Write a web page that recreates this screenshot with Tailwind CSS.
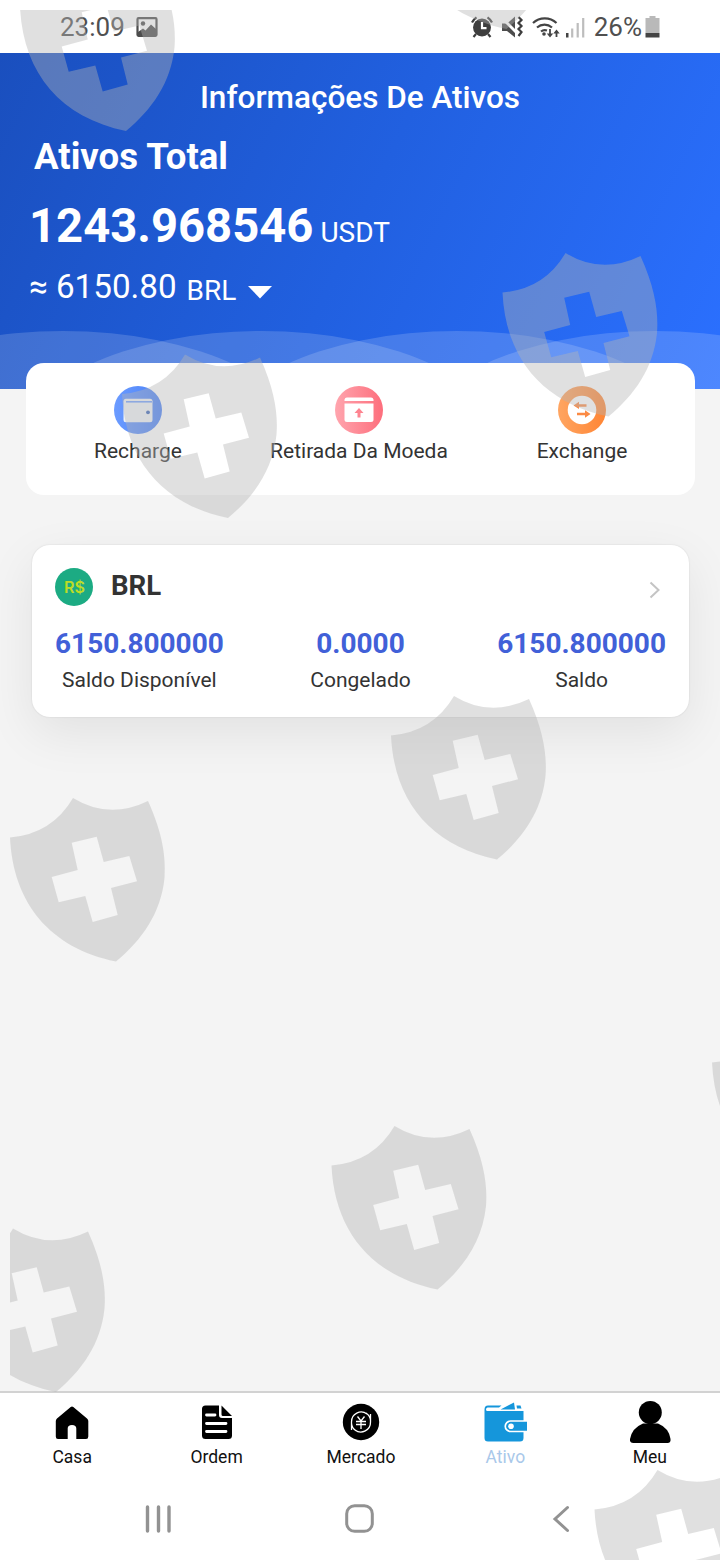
<!DOCTYPE html>
<html lang="pt-BR">
<head>
<meta charset="utf-8">
<title>Informações De Ativos</title>
<script src="https://cdn.jsdelivr.net/npm/@tailwindcss/browser@4"></script>
</head>
<body class="bg-[#f4f4f4]">
<div class="relative flex h-[1560px] w-[720px] flex-col overflow-hidden bg-[#f4f4f4] font-['Roboto','Noto_Sans',sans-serif] text-[#333]">

  <!-- Status bar -->
  <div class="flex h-[53px] shrink-0 items-center justify-between bg-white pt-px pr-[60px] pl-[60px] text-[26px] text-[#505050]">
    <div class="flex items-center gap-[11px]">
      <span>23:09</span>
      <svg class="h-[20px] w-[22px]" viewBox="0 0 22 20"><rect x="1.500" y="1.200" width="19" height="17.600" rx="1" fill="none" stroke="#4c4c4c" stroke-width="2.200"/><circle cx="7" cy="6.500" r="2.200" fill="#4c4c4c"/><path d="M2 15 7 11.500 9.500 13.500 15 7.500 20 12V18H2Z" fill="#4c4c4c"/></svg>
    </div>
    <div class="flex items-center">
      <svg class="mr-[7px] h-[22px] w-[22px]" viewBox="0 0 22 22"><circle cx="11" cy="11.500" r="9" fill="#3e3e3e"/><path d="M1 6.500A13 13 0 0 1 5.500 1.300M16.500 1.300A13 13 0 0 1 21 6.500M5 18 2.500 21M17 18 19.500 21" stroke="#3e3e3e" stroke-width="2.200" fill="none"/><path d="M11 6V12.200H15.500" stroke="#fff" stroke-width="2.200" fill="none"/></svg>
      <svg class="mr-[8px] h-[24px] w-[24px]" viewBox="0 0 24 24"><path d="M2 8.500H7L15 1.500V22.500L7 16H2Z" fill="#4c4c4c"/><path d="M1 2 17 18" stroke="#fff" stroke-width="3"/><path d="M18.500 2 21.500 5 18.500 8 21.500 11 18.500 14 21.500 17 18.500 21" fill="none" stroke="#3e3e3e" stroke-width="2.200"/></svg>
      <svg class="mr-[6px] h-[24px] w-[28px]" viewBox="0 0 28 24"><g fill="none" stroke="#444" stroke-width="2.200"><path d="M1 8A17 17 0 0 1 24.500 8M5 12.500A11.500 11.500 0 0 1 20 12.500M9 16.500A6 6 0 0 1 15 15.500"/><path d="M18 14V21M24.500 22V16" stroke-width="1.800"/></g><circle cx="12" cy="19" r="1.800" fill="#444"/><path d="M14.800 18.500H21.200L18 22.500ZM21.300 18.500H27.700L24.500 14.500Z" fill="#444"/></svg>
      <svg class="mr-[9px] h-[22px] w-[19px]" viewBox="0 0 19 22"><rect x="0" y="17" width="2.500" height="4.500" fill="#444"/><path d="M6.200 12.500V21.500M11.700 7V21.500M17.200 2V21.500" stroke="#bdbdbd" stroke-width="2.200"/></svg>
      <span>26%</span>
      <svg class="ml-[3px] h-[22px] w-[15px]" viewBox="0 0 15 22"><path d="M4.500 0H10.500V2H14.500V17H0.500V2H4.500Z" fill="#b9b9b9"/><rect x="0.500" y="17" width="14" height="4.500" fill="#444"/></svg>
    </div>
  </div>

  <!-- Header -->
  <div class="relative flex h-[336px] shrink-0 flex-col bg-linear-[115deg,#1a4fbe_0%,#2160e0_50%,#2b70ff_100%] text-white">
    <svg class="absolute inset-0 h-[336px] w-[720px]" viewBox="0 0 720 336"><g fill="#fff" fill-opacity=".16"><ellipse cx="63" cy="398" rx="247" ry="120"/><ellipse cx="261" cy="398" rx="247" ry="120"/><ellipse cx="457" cy="398" rx="247" ry="120"/><ellipse cx="655" cy="398" rx="247" ry="120"/></g></svg>
    <h1 class="relative h-[89px] text-center text-[31.5px] leading-[89px] font-medium">Informações De Ativos</h1>
    <h2 class="relative h-[29px] pl-[34px] text-[36.6px] leading-[29px] font-bold">Ativos Total</h2>
    <div class="relative flex h-[110px] items-baseline pl-[29px] leading-[110px]"><span class="text-[47.2px] font-bold">1243.968546</span><span class="ml-[7px] text-[28px]">USDT</span></div>
    <div class="relative flex h-[12px] items-start pl-[29px] leading-[12px]"><span class="text-[33.2px]">≈ 6150.80</span><span class="ml-[10px] pt-[4px] text-[28px]">BRL</span><svg class="mt-[5px] ml-[12px] h-[13px] w-[24px]" viewBox="0 0 24 13"><path d="M0 0H24L12 12.500Z" fill="#fff"/></svg></div>
  </div>

  <!-- Actions -->
  <div class="relative -mt-[26px] ml-[26px] grid h-[132px] w-[669px] shrink-0 grid-cols-[222px_220px_226px] rounded-[18px] bg-white pl-[1px] text-[21px]">
    <div class="flex flex-col items-center pt-[23px]">
      <svg class="h-[48px] w-[48px]" viewBox="0 0 48 48"><defs><linearGradient id="b"><stop stop-color="#6b9bff"/><stop offset="1" stop-color="#4a82f8"/></linearGradient></defs><circle cx="24" cy="24" r="24" fill="url(#b)"/><rect x="9.500" y="12.700" width="29" height="23.500" rx="2.500" fill="#f0f3f6"/><path d="M12 15.800H38" stroke="#6b9bff" stroke-width="1.500"/><circle cx="34" cy="26.300" r="1.900" fill="#3c66b8"/></svg>
      <span class="mt-[4px] leading-[26px]">Recharge</span>
    </div>
    <div class="flex flex-col items-center pt-[23px]">
      <svg class="h-[48px] w-[48px]" viewBox="0 0 48 48"><defs><linearGradient id="r"><stop stop-color="#ffa5ae"/><stop offset="1" stop-color="#fd6e7c"/></linearGradient></defs><circle cx="24" cy="24" r="24" fill="url(#r)"/><path d="M9.500 15V13.500A2.500 2.500 0 0 1 12 11.500H36A2.500 2.500 0 0 1 38.500 13.500V15Z" fill="#fff"/><path d="M9.500 17.500H38.500V33.500A2.500 2.500 0 0 1 36 36H12A2.500 2.500 0 0 1 9.500 33.500Z" fill="#fff"/><path d="M24 22 28.500 27H25.500V31.500H22.500V27H19.500Z" fill="#fe8490"/></svg>
      <span class="mt-[4px] leading-[26px]">Retirada Da Moeda</span>
    </div>
    <div class="flex flex-col items-center pt-[23px]">
      <svg class="h-[48px] w-[48px]" viewBox="0 0 48 48"><defs><linearGradient id="o"><stop stop-color="#ffa561"/><stop offset="1" stop-color="#ff8534"/></linearGradient></defs><circle cx="24" cy="24" r="24" fill="url(#o)"/><circle cx="24" cy="24" r="14.300" fill="#fff"/><path d="M15.500 19.500 21 15.800V18.200H28.500V20.800H21V23Z M32.500 28 27 24.300V26.700H19V29.300H27V31.700Z" fill="#fb8a44"/></svg>
      <span class="mt-[4px] leading-[26px]">Exchange</span>
    </div>
  </div>

  <!-- BRL balance -->
  <div class="relative mt-[50px] ml-[32px] h-[172px] w-[657px] shrink-0 rounded-[18px] bg-white px-[23px] shadow-[0_0_2px_rgba(0,0,0,0.12),0_16px_50px_rgba(0,0,0,0.08)]">
    <div class="flex h-[84px] items-center">
      <svg class="h-[38px] w-[38px]" viewBox="0 0 38 38"><circle cx="19" cy="19" r="19" fill="#1cab83"/><text x="9" y="24.800" textLength="21" lengthAdjust="spacingAndGlyphs" font-family="Inter, Roboto, sans-serif" font-size="16" font-weight="600" fill="#bddc27">R$</text></svg>
      <span class="-mt-[2px] ml-[18px] text-[27.6px] font-bold">BRL</span>
      <svg class="mt-[6px] mr-[6px] ml-auto h-[18px] w-[11px]" viewBox="0 0 11 18"><path d="M1.500 1.500 9.500 9 1.500 16.500" fill="none" stroke="#c4c4c4" stroke-width="2"/></svg>
    </div>
    <div class="flex justify-between">
      <div class="flex flex-col items-center"><span class="text-[28px] leading-[30px] font-bold text-[#4160d8]">6150.800000</span><span class="mt-[8px] text-[21px] leading-[26px]">Saldo Disponível</span></div>
      <div class="flex flex-col items-center"><span class="text-[28px] leading-[30px] font-bold text-[#4160d8]">0.0000</span><span class="mt-[8px] text-[21px] leading-[26px]">Congelado</span></div>
      <div class="flex flex-col items-center"><span class="text-[28px] leading-[30px] font-bold text-[#4160d8]">6150.800000</span><span class="mt-[8px] text-[21px] leading-[26px]">Saldo</span></div>
    </div>
  </div>

  <div class="min-h-0 flex-1"></div>

  <!-- Tab bar -->
  <div class="-mr-[2px] grid h-[86px] shrink-0 grid-cols-5 border-t-2 border-[#d2d2d2] bg-white text-[17.5px] text-[#111]">
    <div class="flex flex-col items-center">
      <svg class="mt-[8px] h-[44px] w-[44px]" viewBox="0 0 44 44"><path d="M20.700 6Q22 5 23.300 6L37 17.500Q38.300 18.600 38.300 20V35.500Q38.300 38 36 38H26.300V27.500Q26.300 24 22 24T17.700 27.500V38H8Q5.800 38 5.800 35.500V20Q5.800 18.600 7 17.500Z" fill="#000"/></svg>
      <span class="mt-[1px] leading-[22px]">Casa</span>
    </div>
    <div class="flex flex-col items-center">
      <svg class="mt-[8px] h-[44px] w-[44px]" viewBox="0 0 44 44"><path d="M9.500 4.500H24V14Q24 17 27 17H37V34.500Q37 38 33.500 38H10.500Q7 38 7 34.500V8Q7 4.500 10.500 4.500ZM26.500 4.500 37 15H28Q26.500 15 26.500 13.500Z" fill="#000"/><path d="M11.500 14H20M11.500 22.500H31M11.500 30.500H31" stroke="#fff" stroke-width="2.800" stroke-linecap="round"/></svg>
      <span class="mt-[1px] leading-[22px]">Ordem</span>
    </div>
    <div class="flex flex-col items-center">
      <svg class="mt-[8px] h-[44px] w-[44px]" viewBox="0 0 44 44"><circle cx="22" cy="21" r="18.200" fill="#000"/><g fill="none" stroke="#fff" stroke-width="1.300"><path d="M31.500 13V21A9.700 9.700 0 0 1 16 29M12.500 29V21A9.700 9.700 0 0 1 28 13M31.500 20A9.700 9.700 0 0 0 27 12M12.500 22A9.700 9.700 0 0 0 17 29.800"/><path d="M18.500 15.500 22 20 25.500 15.500M17 20.500H27M17 23.500H27M22 20V28"/></g></svg>
      <span class="mt-[1px] leading-[22px]">Mercado</span>
    </div>
    <div class="flex flex-col items-center">
      <svg class="mt-[8px] h-[44px] w-[44px]" viewBox="0 0 44 44"><path d="M1.500 8.500V37Q1.500 40.500 5 40.500H37Q40.500 40.500 40.500 37V10H4.500Q3 10 3 8.500T4.500 6.500H16L18.500 4.500H5Q1.500 4.500 1.500 8.500Z" fill="#1596db"/><path d="M17.500 8.500 31 1.500 32 8.500ZM33.500 4.500H37.500L38.500 7.500H34Z" fill="#1596db"/><path d="M44 20H27.500A5.200 5.200 0 0 0 27.500 30.500H44" fill="#1596db" stroke="#fff" stroke-width="1.700"/><circle cx="28" cy="25.200" r="2.800" fill="#fff"/></svg>
      <span class="mt-[1px] leading-[22px] text-[#a9c8ea]">Ativo</span>
    </div>
    <div class="flex flex-col items-center">
      <svg class="mt-[8px] h-[44px] w-[44px]" viewBox="0 0 44 44"><circle cx="22.300" cy="11.500" r="11.500" fill="#000"/><path d="M15 22.500H30Q41 27 42.500 38Q43 42 39.500 42H5.500Q1.500 42 2 38Q4 27 15 22.500Z" fill="#000"/></svg>
      <span class="mt-[1px] leading-[22px]">Meu</span>
    </div>
  </div>

  <!-- System navigation -->
  <div class="flex h-[83px] shrink-0 items-center bg-white pl-[145px]">
    <svg class="h-[28px] w-[27px]" viewBox="0 0 27 28"><path d="M2.500 2V26M13.500 2V26M24 2V26" stroke="#929292" stroke-width="3.400" stroke-linecap="round"/></svg>
    <svg class="ml-[173px] h-[29px] w-[29px]" viewBox="0 0 29 29"><rect x="1.700" y="1.700" width="25.600" height="25.600" rx="8" fill="none" stroke="#929292" stroke-width="3"/></svg>
    <svg class="ml-[178px] h-[28px] w-[18px]" viewBox="0 0 18 28"><path d="M15.500 2.500 3 14 15.500 25.500" fill="none" stroke="#929292" stroke-width="3" stroke-linecap="round"/></svg>
  </div>

  <!-- Shield watermarks over the whole screen -->
  <svg class="pointer-events-none absolute inset-0 h-[1560px] w-[720px]" viewBox="0 0 720 1560">
    <defs>
      <clipPath id="area"><rect x="10" y="10" width="710" height="1550"/></clipPath>
      <path id="shield" fill="#b3b3b3" fill-opacity=".41" fill-rule="evenodd" d="M0 39.500Q42 36 63 0Q99 22 138 3C153 36 156 60 154.500 80C151 115 132 142 106 163.500C40 150 3 105 0 39.500ZM61.700 44.700 86.700 38.700 93.700 64 119.300 58 127 83.300 101 90 107.700 117 82.700 124 75.300 98 48.700 104.300 41.700 79 67.700 72Z"/>
    </defs>
    <g clip-path="url(#area)">
      <use href="#shield" x="20" y="-32.500"/>
      <use href="#shield" x="400.500" y="-134.500"/>
      <use href="#shield" x="502.500" y="253"/>
      <use href="#shield" x="122" y="354.500"/>
      <use href="#shield" x="391" y="696"/>
      <use href="#shield" x="10" y="798"/>
      <use href="#shield" x="712" y="1023"/>
      <use href="#shield" x="331.500" y="1126"/>
      <use href="#shield" x="-50" y="1228.500"/>
      <use href="#shield" x="594.500" y="1470"/>
    </g>
  </svg>
</div>
</body>
</html>
